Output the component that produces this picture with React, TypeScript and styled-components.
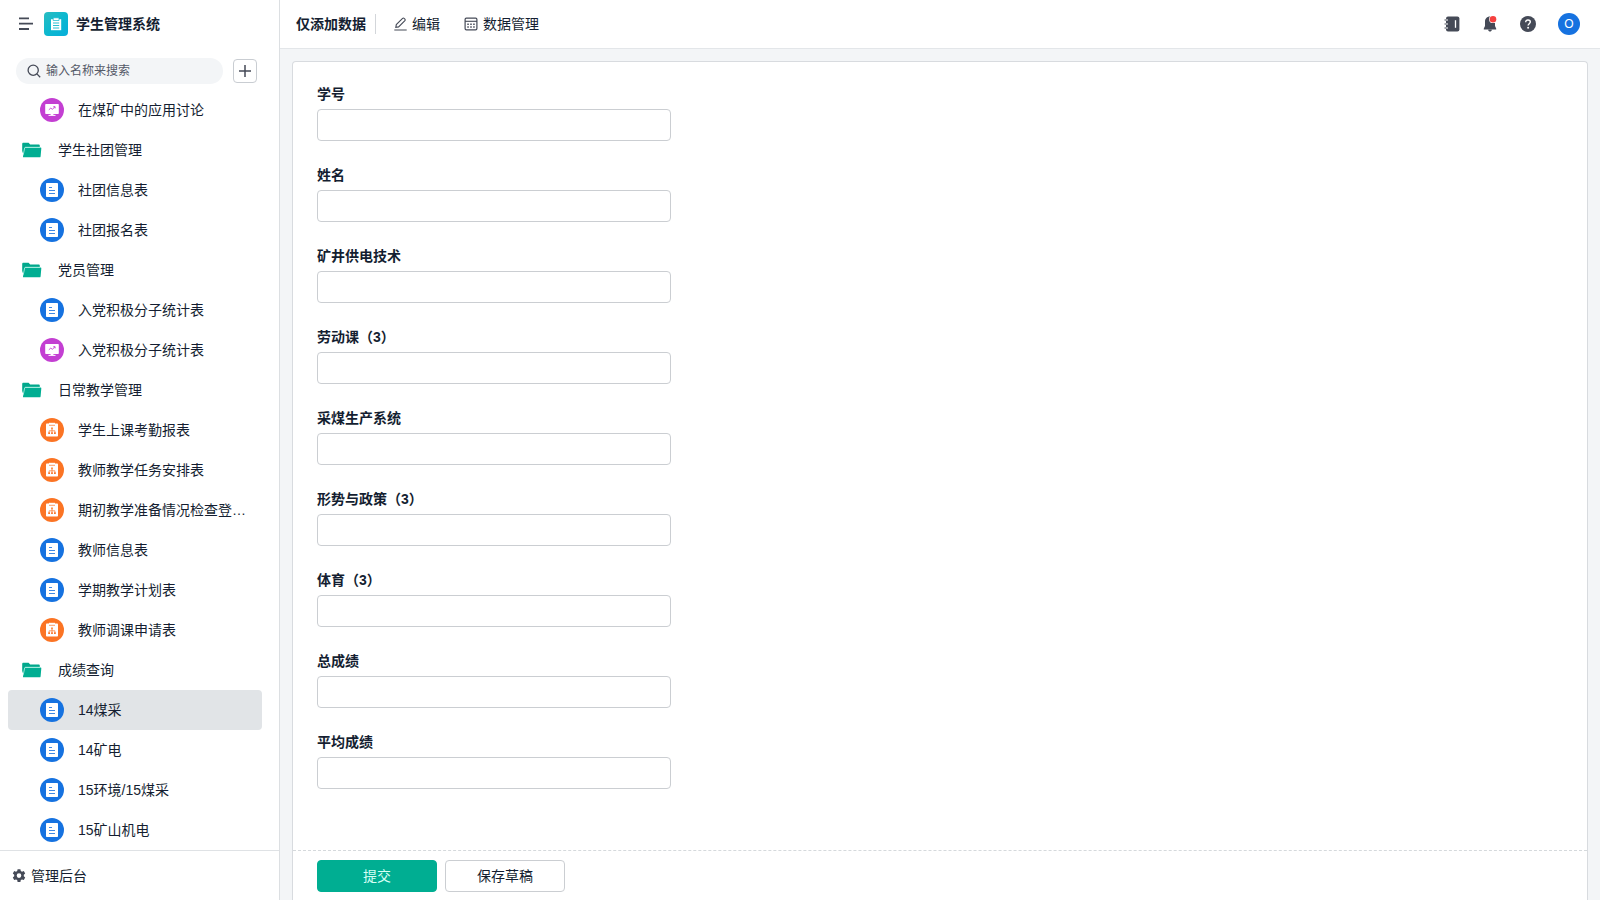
import React from 'react';
import styled, { createGlobalStyle } from 'styled-components';

const GlobalStyle = createGlobalStyle`
  *, *::before, *::after { box-sizing: border-box; }
  body {
    margin: 0;
    background: #f3f5f7;
    color: #141e31;
    font-family: "Liberation Sans", "Noto Sans CJK SC", sans-serif;
    font-size: 14px;
    line-height: 20px;
  }
  button, input { font: inherit; color: inherit; }
  button { cursor: pointer; }
  a { color: inherit; text-decoration: none; }
  svg { display: block; flex: none; }
`;

const Page = styled.div`
  display: grid;
  grid-template-columns: 280px minmax(0, 1fr);
  height: 100vh;
  overflow: hidden;
`;

const Sidebar = styled.aside`
  display: flex;
  flex-direction: column;
  min-height: 0;
  background: #fff;
  border-right: 1px solid #dcdfe2;
`;

const Brand = styled.div`
  display: flex;
  align-items: center;
  flex: none;
  height: 48px;
  padding-left: 18px;
  gap: 8px;
`;

const BrandName = styled.h1`
  margin: 0;
  font-size: 14px;
  font-weight: 600;
`;

const IconButton = styled.button`
  display: flex;
  align-items: center;
  justify-content: center;
  padding: 0;
  border: 0;
  background: none;
  color: #454a57;
`;

const SearchRow = styled.div`
  display: flex;
  align-items: center;
  flex: none;
  gap: 10px;
  height: 42px;
  padding: 4px 22px 0 16px;
`;

const SearchBox = styled.label`
  display: flex;
  flex: 1;
  align-items: center;
  gap: 5px;
  min-width: 0;
  height: 26px;
  padding: 0 12px 0 11px;
  border-radius: 13px;
  background: #f3f5f7;
  color: #454a57;
`;

const SearchInput = styled.input`
  flex: 1;
  min-width: 0;
  padding: 0;
  border: 0;
  outline: 0;
  background: transparent;
  font-size: 12px;
  &::placeholder { color: #535967; opacity: 1; }
`;

const AddButton = styled(IconButton)`
  flex: none;
  width: 24px;
  height: 24px;
  border: 1px solid #c9cdd2;
  border-radius: 4px;
  background: #fff;
`;

const NavList = styled.ul`
  flex: 1;
  min-height: 0;
  margin: 0;
  padding: 0 17px 0 8px;
  overflow: hidden;
  list-style: none;
`;

const NavLink = styled.a<{ $folder?: boolean; $active?: boolean }>`
  display: flex;
  align-items: center;
  gap: ${(p) => (p.$folder ? 16 : 14)}px;
  height: 40px;
  padding: 0 14px 0 ${(p) => (p.$folder ? 14 : 32)}px;
  border-radius: 4px;
  background: ${(p) => (p.$active ? '#e1e4e7' : 'transparent')};
`;

const NavText = styled.span`
  overflow: hidden;
  text-overflow: ellipsis;
  white-space: nowrap;
`;

const AdminLink = styled.a`
  display: flex;
  align-items: center;
  flex: none;
  gap: 5px;
  height: 50px;
  padding-left: 12px;
  border-top: 1px solid #dfe2e5;
`;

const Main = styled.div`
  display: flex;
  flex-direction: column;
  min-width: 0;
  min-height: 0;
`;

const TopBar = styled.header`
  display: flex;
  align-items: center;
  justify-content: space-between;
  flex: none;
  height: 49px;
  padding: 0 20px 0 16px;
  border-bottom: 1px solid #e3e6e9;
  background: #fff;
`;

const TopGroup = styled.div<{ $gap: number }>`
  display: flex;
  align-items: center;
  gap: ${(p) => p.$gap}px;
`;

const PageTitle = styled.h2`
  margin: 0;
  padding-right: 9px;
  border-right: 1px solid #d3d6da;
  font-size: 14px;
  font-weight: 600;
`;

const ToolButton = styled.button`
  display: flex;
  align-items: center;
  gap: 5px;
  padding: 0;
  border: 0;
  background: none;
  svg { color: #454a57; }
`;

const Tools = styled.div`
  display: flex;
  gap: 24px;
`;

const Avatar = styled.button`
  width: 22px;
  height: 22px;
  padding: 0;
  border: 0;
  border-radius: 50%;
  background: #1672e0;
  color: #fff;
  font-size: 12px;
  line-height: 22px;
`;

const Card = styled.form`
  display: flex;
  flex: 1;
  flex-direction: column;
  min-height: 0;
  margin: 12px 12px 0;
  border: 1px solid #d8dbdf;
  border-bottom: 0;
  border-radius: 4px 4px 0 0;
  background: #fff;
`;

const Fields = styled.div`
  display: flex;
  flex: 1;
  flex-direction: column;
  gap: 24px;
  min-height: 0;
  padding: 22px 24px;
  overflow: hidden;
`;

const Field = styled.label`
  display: flex;
  flex: none;
  flex-direction: column;
  gap: 5px;
  width: 354px;
  max-width: 100%;
  font-weight: 600;
`;

const FieldInput = styled.input`
  width: 100%;
  height: 32px;
  padding: 0 10px;
  border: 1px solid #cbced2;
  border-radius: 4px;
  outline: 0;
  background: #fff;
  font-weight: 400;
`;

const Actions = styled.div`
  display: flex;
  flex: none;
  gap: 8px;
  height: 50px;
  padding: 9px 24px 0;
  border-top: 1px dashed #d5d9dc;
`;

const ActionButton = styled.button<{ $primary?: boolean }>`
  width: 120px;
  height: 32px;
  padding: 0;
  border: 1px solid ${(p) => (p.$primary ? '#00ae92' : '#cbced2')};
  border-radius: 4px;
  background: ${(p) => (p.$primary ? '#00ae92' : '#fff')};
  color: ${(p) => (p.$primary ? '#d5fff4' : '#141e31')};
`;

const MenuIcon = () => (
  <svg width="18" height="16" viewBox="0 0 18 16" fill="none" stroke="currentColor" strokeWidth="1.8">
    <path d="M1 2.3h10M1 7.6h14M1 13h10" />
  </svg>
);

const LogoIcon = () => (
  <svg width="24" height="24" viewBox="0 0 24 24" aria-hidden="true">
    <defs>
      <linearGradient id="logoFill" x1="0" y1="0" x2="1" y2="1">
        <stop offset="0" stopColor="#2abcc0" />
        <stop offset="0.5" stopColor="#0db8cf" />
        <stop offset="1" stopColor="#07aedb" />
      </linearGradient>
    </defs>
    <rect width="24" height="24" rx="4" fill="url(#logoFill)" />
    <path d="M7 7.2h10.200V18.200H7z" fill="#fff" />
    <path d="M9.200 5.800h5.800v2.700H9.200z" fill="#fff" stroke="#10b8cc" strokeWidth="0.7" />
    <path d="M9 11h6.200M9 13.500h6.200M9 16h6.200" stroke="#10b8cc" strokeWidth="0.9" />
  </svg>
);

const SearchIcon = () => (
  <svg width="14" height="14" viewBox="0 0 14 14" fill="none" stroke="currentColor" strokeWidth="1.3">
    <circle cx="6.2" cy="6.2" r="5.1" />
    <path d="M9.9 9.9l3.3 3.3" />
  </svg>
);

const PlusIcon = () => (
  <svg width="14" height="14" viewBox="0 0 14 14" fill="none" stroke="currentColor" strokeWidth="1.5">
    <path d="M7 1v12M1 7h12" />
  </svg>
);

const FolderIcon = () => (
  <svg width="20" height="16" viewBox="0 0 20 16" aria-hidden="true">
    <path d="M0.2 1.9c0-.7.5-1.2 1.2-1.2h5.2l1.6 1.7h8.4c.7 0 1.2.5 1.2 1.2V5H3.3L1.4 12.6 0.2 9z" fill="#00a88c" />
    <path d="M3.4 5.6h15.1c.6 0 .9.4.8.9l-.7 7.9c-.1.6-.5.9-1.100.9H1.8c-.6 0-.9-.4-.8-.9L2.5 6.3c.1-.4.4-.7.9-.7z" fill="#00ae92" />
    <path d="M1.3 12.6L2.6 6c.1-.5.4-.7.9-.7h14.8" fill="none" stroke="#b5f5e6" strokeWidth="0.8" />
  </svg>
);

const FormIcon = () => (
  <svg width="24" height="24" viewBox="0 0 24 24" aria-hidden="true">
    <circle cx="12" cy="12" r="12" fill="#1672e0" />
    <rect x="6" y="5" width="12" height="14" rx="0.8" fill="#fff" />
    <path d="M9 9.5h3M9 12.500h6M9 15.500h6" stroke="#3f88e4" strokeWidth="1.100" />
  </svg>
);

const FlowIcon = () => (
  <svg width="24" height="24" viewBox="0 0 24 24" aria-hidden="true">
    <circle cx="12" cy="12" r="12" fill="#fb7424" />
    <rect x="6" y="5.600" width="12" height="13" rx="0.8" fill="#fff" />
    <path d="M9 4.800h6v1.900H9z" fill="#fff" />
    <path d="M9 7.300h6" stroke="#fb7424" strokeWidth="0.7" />
    <path d="M11.200 9.500h1.600v1.700h-1.600zM8.200 14.300h1.800v1.700H8.200zM11.100 14.300h1.800v1.700h-1.800zM14 14.300h1.800v1.700H14z" fill="#fb7424" />
    <path d="M12 11v3.400M9.100 14.400v-1.600h5.800v1.600" fill="none" stroke="#fb7424" strokeWidth="0.7" />
  </svg>
);

const DashboardIcon = () => (
  <svg width="24" height="24" viewBox="0 0 24 24" aria-hidden="true">
    <circle cx="12" cy="12" r="12" fill="#c33fd2" />
    <rect x="5.200" y="6" width="13.600" height="10" rx="0.8" fill="#fff" />
    <path d="M10.600 15.800h2.800v1.400h-2.800z" fill="#fff" />
    <path d="M8.500 17.400h7" stroke="#fff" strokeWidth="1" />
    <path d="M8.800 11.800l2-1.700 1.500 1.200 2.600-2.400M13.300 8.700h1.800v1.700" fill="none" stroke="#c33fd2" strokeWidth="0.9" />
  </svg>
);

const GearIcon = () => (
  <svg width="14" height="14" viewBox="0 0 14 14" aria-hidden="true">
    <path
      fill="#454a57"
      fillRule="evenodd"
      d="M5.600 0.200h2.800l.4 1.800 1.200.7 1.800-.6 1.400 2.400-1.400 1.300v1.400l1.400 1.300-1.400 2.400-1.800-.5-1.200.7-.4 1.800H5.600l-.4-1.800-1.200-.7-1.800.5L.8 8.500 2.200 7.200V5.800L.8 4.500l1.400-2.400 1.800.6 1.200-.7zM7 4.300a2.300 2.300 0 1 0 0 4.600 2.300 2.300 0 0 0 0-4.600z"
    />
  </svg>
);

const EditIcon = () => (
  <svg width="13" height="14" viewBox="0 0 13 14" fill="none" stroke="currentColor" strokeWidth="1.1">
    <path d="M1.800 10.300l.5-2.700 6.300-6.200c.5-.5 1.100-.5 1.500 0l.8.8c.5.5.5 1 0 1.500l-6.300 6.200zM0.300 13h12.400" />
  </svg>
);

const DataIcon = () => (
  <svg width="14" height="14" viewBox="0 0 14 14" fill="none" stroke="currentColor">
    <rect x="1.100" y="1.100" width="11.800" height="11.800" rx="1.300" strokeWidth="1.200" />
    <path d="M1 4.300h12" strokeWidth="1.100" />
    <path d="M3.300 7.200h1.500M6.250 7.200h1.500M9.200 7.200h1.500M3.300 10h1.500M6.250 10h1.500M9.200 10h1.500" strokeWidth="1.400" />
  </svg>
);

const ContactsIcon = () => (
  <svg width="16" height="16" viewBox="0 0 16 16" aria-hidden="true">
    <rect x="2" y="0.600" width="13.400" height="14.800" rx="2" fill="#454a57" />
    <path d="M0.500 4h3.500M0.500 8h3.500M0.500 12h3.500" stroke="#fff" strokeWidth="2.200" />
    <path d="M0.500 4h3.500M0.500 8h3.500M0.500 12h3.500" stroke="#454a57" strokeWidth="1.100" />
    <path d="M11.500 4.200v7.600" stroke="#fff" strokeWidth="1.300" />
  </svg>
);

const BellIcon = () => (
  <svg width="16" height="18" viewBox="0 0 16 18" aria-hidden="true">
    <path d="M8 1.500c-3 0-5 2.200-5 5.200v4.300l-1.200 2.600v1h12.400v-1L13 11V6.700c0-3-2-5.200-5-5.200z" fill="#454a57" />
    <path d="M6.200 14.500h3.600c0 1.400-.8 2.100-1.800 2.100s-1.800-.7-1.800-2.100z" fill="#454a57" />
    <circle cx="11" cy="4.200" r="3.900" fill="#fff" />
    <circle cx="11" cy="4.200" r="3.300" fill="#f5413f" />
  </svg>
);

const HelpIcon = () => (
  <svg width="16" height="16" viewBox="0 0 16 16" aria-hidden="true">
    <circle cx="8" cy="8" r="8" fill="#454a57" />
    <path d="M5.700 6.200c0-1.300 1-2.200 2.300-2.200s2.300.9 2.300 2.100c0 1.600-2.200 1.800-2.200 3.500" fill="none" stroke="#fff" strokeWidth="1.400" />
    <circle cx="8.100" cy="11.800" r="0.950" fill="#fff" />
  </svg>
);

type Kind = 'folder' | 'form' | 'flow' | 'dashboard';

const icons: Record<Kind, () => React.JSX.Element> = {
  folder: FolderIcon,
  form: FormIcon,
  flow: FlowIcon,
  dashboard: DashboardIcon,
};

const navItems: { kind: Kind; text: string; active?: boolean }[] = [
  { kind: 'dashboard', text: '在煤矿中的应用讨论' },
  { kind: 'folder', text: '学生社团管理' },
  { kind: 'form', text: '社团信息表' },
  { kind: 'form', text: '社团报名表' },
  { kind: 'folder', text: '党员管理' },
  { kind: 'form', text: '入党积极分子统计表' },
  { kind: 'dashboard', text: '入党积极分子统计表' },
  { kind: 'folder', text: '日常教学管理' },
  { kind: 'flow', text: '学生上课考勤报表' },
  { kind: 'flow', text: '教师教学任务安排表' },
  { kind: 'flow', text: '期初教学准备情况检查登…' },
  { kind: 'form', text: '教师信息表' },
  { kind: 'form', text: '学期教学计划表' },
  { kind: 'flow', text: '教师调课申请表' },
  { kind: 'folder', text: '成绩查询' },
  { kind: 'form', text: '14煤采', active: true },
  { kind: 'form', text: '14矿电' },
  { kind: 'form', text: '15环境/15煤采' },
  { kind: 'form', text: '15矿山机电' },
];

const fields = [
  '学号',
  '姓名',
  '矿井供电技术',
  '劳动课（3）',
  '采煤生产系统',
  '形势与政策（3）',
  '体育（3）',
  '总成绩',
  '平均成绩',
];

export default function App() {
  return (
    <>
      <GlobalStyle />
      <Page>
        <Sidebar>
          <Brand>
            <IconButton type="button" aria-label="菜单"><MenuIcon /></IconButton>
            <LogoIcon />
            <BrandName>学生管理系统</BrandName>
          </Brand>
          <SearchRow>
            <SearchBox>
              <SearchIcon />
              <SearchInput type="text" placeholder="输入名称来搜索" aria-label="搜索" />
            </SearchBox>
            <AddButton type="button" aria-label="新建"><PlusIcon /></AddButton>
          </SearchRow>
          <NavList>
            {navItems.map(({ kind, text, active }, i) => {
              const Icon = icons[kind];
              return (
                <li key={i}>
                  <NavLink href="#" $folder={kind === 'folder'} $active={active}>
                    <Icon />
                    <NavText>{text}</NavText>
                  </NavLink>
                </li>
              );
            })}
          </NavList>
          <AdminLink href="#"><GearIcon />管理后台</AdminLink>
        </Sidebar>
        <Main>
          <TopBar>
            <TopGroup $gap={18}>
              <PageTitle>仅添加数据</PageTitle>
              <Tools>
                <ToolButton type="button"><EditIcon />编辑</ToolButton>
                <ToolButton type="button"><DataIcon />数据管理</ToolButton>
              </Tools>
            </TopGroup>
            <TopGroup $gap={22}>
              <IconButton type="button" aria-label="通讯录"><ContactsIcon /></IconButton>
              <IconButton type="button" aria-label="通知"><BellIcon /></IconButton>
              <IconButton type="button" aria-label="帮助"><HelpIcon /></IconButton>
              <Avatar type="button">O</Avatar>
            </TopGroup>
          </TopBar>
          <Card onSubmit={(e) => e.preventDefault()}>
            <Fields>
              {fields.map((name) => (
                <Field key={name}>
                  {name}
                  <FieldInput type="text" />
                </Field>
              ))}
            </Fields>
            <Actions>
              <ActionButton type="submit" $primary>提交</ActionButton>
              <ActionButton type="button">保存草稿</ActionButton>
            </Actions>
          </Card>
        </Main>
      </Page>
    </>
  );
}
